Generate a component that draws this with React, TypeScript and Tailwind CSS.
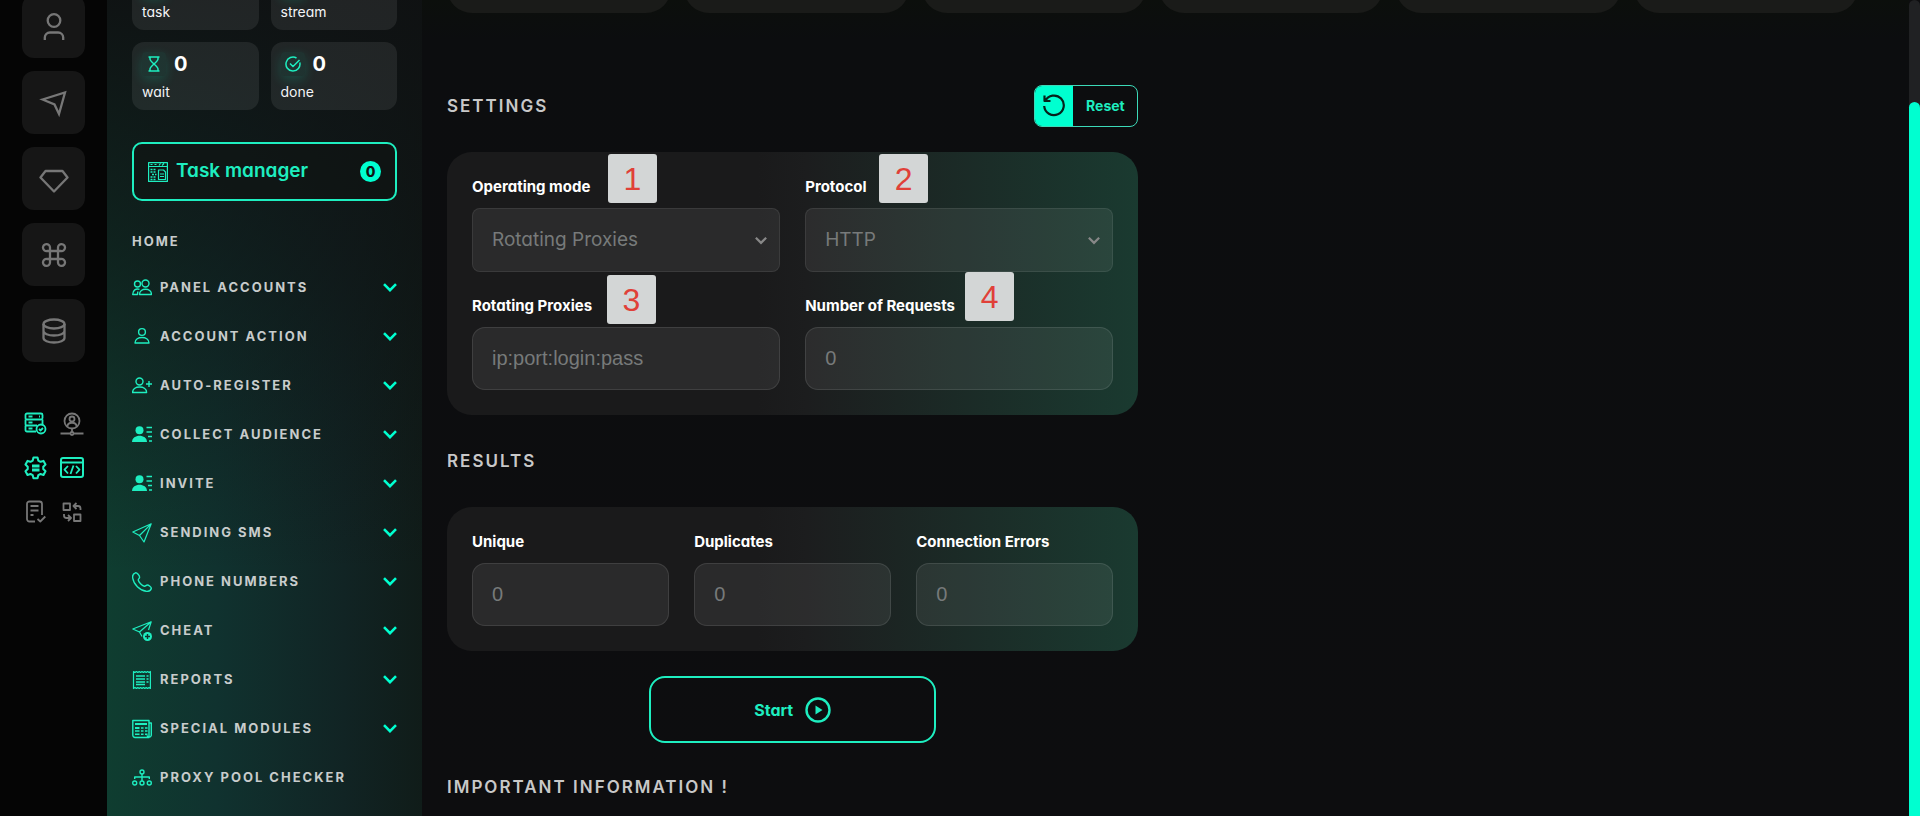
// ============================================================
// Proxy checker screen: icon rail, module sidebar, settings form
// ============================================================
import { useId } from 'react';
import type { ReactNode } from 'react';

const FONT = "font-['Inter','Liberation_Sans',sans-serif] [font-feature-settings:'cv11','ss03']";

// --- icons ---
interface IconProps {
  children: ReactNode;
  className?: string;
  box?: number;
  width?: number;
}

function Icon({ children, className = 'w-5 h-5', box = 20, width = 1.4 }: IconProps) {
  return (
    <svg
      className={`shrink-0 ${className}`}
      viewBox={`0 0 ${box} ${box}`}
      fill="none"
      stroke="currentColor"
      strokeWidth={width}
      strokeLinejoin="round"
      aria-hidden="true"
    >
      {children}
    </svg>
  );
}

function Chevron({ className }: { className: string }) {
  return (
    <svg className={`shrink-0 ${className}`} viewBox="0 0 14 9" fill="none" stroke="currentColor" strokeWidth="2.6" aria-hidden="true">
      <path d="M1 1.2l6 6 6-6" />
    </svg>
  );
}

const railItems = [
  {
    label: 'Profile',
    icon: (
      <>
        <circle cx="15" cy="8.5" r="6.3" />
        <path d="M5.8 28v-2.5a5 5 0 0 1 5-5h8.4a5 5 0 0 1 5 5V28" />
      </>
    ),
  },
  { label: 'Send', icon: <path strokeLinejoin="miter" d="M3.5 11.5L26 4.5l-6 21.5-4.5-9.5z" /> },
  { label: 'Premium', icon: <path d="M6.5 7h17l5 6.500L15 27.500 1.500 13.500z" /> },
  {
    label: 'Shortcuts',
    icon: (
      <path d="M11 11h8v8h-8zM11 11H8a3.500 3.500 0 1 1 3-3.500zM19 11h3a3.500 3.500 0 1 0-3-3.500zM11 19H8a3.500 3.500 0 1 0 3 3.500zM19 19h3a3.500 3.500 0 1 1-3 3.500z" />
    ),
  },
  {
    label: 'Database',
    icon: (
      <>
        <ellipse cx="15" cy="8" rx="10.500" ry="4.500" />
        <path d="M4.500 8v14c0 2.500 4.700 4.500 10.500 4.500s10.500-2 10.500-4.500V8M4.500 15c0 2.500 4.700 4.500 10.500 4.500s10.500-2 10.500-4.500" />
      </>
    ),
  },
];

const quickItems = [
  {
    label: 'Servers',
    active: true,
    icon: (
      <>
        <rect x="1.500" y="1.500" width="17" height="6" rx="1.500" />
        <path d="M18.500 7.500v6M13 13.500H3a1.500 1.500 0 0 1-1.500-1.500V7.500M12 19.500H3A1.500 1.500 0 0 1 1.500 18v-4.500" />
        <path strokeWidth="1.800" d="M4.500 4.500h4M4.500 10.500h4M4.500 16.500h4M15 4.500h1" />
        <circle cx="17" cy="17" r="4.500" />
        <path d="M15 17l1.500 1.500 2.500-2.500" />
      </>
    ),
  },
  {
    label: 'Network user',
    active: false,
    icon: (
      <>
        <circle cx="12" cy="9" r="7.500" />
        <circle cx="12" cy="7" r="2.500" />
        <path d="M7.500 14.500c0-5 9-5 9 0M12 16.500V20M0.500 21.500h9.500M14 21.500h9.500" />
        <circle cx="12" cy="21.500" r="1.500" />
      </>
    ),
  },
  {
    label: 'Server settings',
    active: true,
    icon: (
      <>
        <path
          strokeWidth="2.100"
          d="M9.500 1.500h4l.8 3.100 2.200 1.200 3-.9 2 3.600-2.200 2.200v2.400l2.200 2.200-2 3.600-3-.9-2.200 1.200-.8 3.100h-4l-.8-3.100-2.200-1.200-3 .9-2-3.600 2.200-2.200v-2.400L1.500 8.500l2-3.600 3 .9 2.200-1.200z"
        />
        <path strokeWidth="2.400" d="M8 9.700h7.500M8 14.200h7.500" />
        <path strokeWidth="1" d="M8 12h7.500" />
      </>
    ),
  },
  {
    label: 'Code',
    active: true,
    icon: (
      <>
        <rect strokeWidth="2" x="1" y="2" width="22" height="19" rx="2" />
        <path strokeWidth="1.800" d="M1 6.500h22M8 10L4.500 13.700 8 17.500M16 10l3.500 3.700-3.500 3.800M13.500 9.500l-3 8.500" />
      </>
    ),
  },
  {
    label: 'Checklist',
    active: false,
    icon: (
      <>
        <path d="M11 21.500H5.500A2.500 2.500 0 0 1 3 19V4a2.500 2.500 0 0 1 2.500-2.500h10A2.500 2.500 0 0 1 18 4v11M13.500 19l2.800 2.500 5-5" />
        <path d="M6.500 6h8M6.500 10.500h8M6.500 15h3" />
      </>
    ),
  },
  {
    label: 'Swap',
    active: false,
    icon: (
      <>
        <path d="M3.500 3.500H10V10H3.500zM14 14.500h6.500V21H14zM14 6h4a2.500 2.500 0 0 1 2.500 2.500V10M10.500 18h-4A2.500 2.500 0 0 1 4 15.500V14" />
        <path d="M16.500 3L13.500 6l3 3M8 15l3 3-3 3" />
      </>
    ),
  },
];

const person = (
  <>
    <circle cx="10" cy="5" r="3.400" />
    <path d="M3 16c0-7.300 14-7.300 14 0z" />
  </>
);

const audience = (
  <>
    <circle cx="7.500" cy="5.200" r="4" fill="currentColor" stroke="none" />
    <path d="M0 17c0-8.500 15-8.500 15 0z" fill="currentColor" stroke="none" />
    <path d="M14.500 2.500H20M14.500 7H20M16 11.500h4M17 16h3" />
  </>
);

const navItems = [
  {
    label: 'PANEL ACCOUNTS',
    icon: (
      <>
        <circle cx="13.500" cy="5.500" r="3.500" />
        <circle cx="5.500" cy="6" r="3" />
        <path d="M7.500 16.500c0-7 12-7 12 0zM7.500 11.300C4 10.300.7 12 .7 16.500h4.800l.3-3" />
      </>
    ),
  },
  { label: 'ACCOUNT ACTION', icon: person },
  {
    label: 'AUTO-REGISTER',
    icon: (
      <>
        <circle cx="7.500" cy="5.500" r="3.500" />
        <path d="M.6 16.500c0-7.300 14-7.300 14 0zM17 5v6M14 8h6" />
      </>
    ),
  },
  { label: 'COLLECT AUDIENCE', icon: audience },
  { label: 'INVITE', icon: audience },
  { label: 'SENDING SMS', icon: <path strokeWidth="1.200" d="M.8 9L19.200.8 12 19 7.500 12.500zM19.200.8L7.500 12.500" /> },
  {
    label: 'PHONE NUMBERS',
    icon: (
      <path d="M3.500.8C1 1.500.4 4 .7 6c1 6.500 7 12.500 13.500 13.300 2.300.2 4.600-.8 5.100-2.800.3-1.300-2.800-3.500-4-3.500-1.200 0-1.700 1.500-3 1.200-2.500-.6-5.500-3.700-6-6-.3-1.300 1.300-1.700 1.300-3C7.600 3.500 5 .5 3.500.8z" />
    ),
  },
  {
    label: 'CHEAT',
    icon: (
      <>
        <path strokeWidth="1.200" d="M10 15.500L7.500 11 .8 8 19.200.8 16.500 9M19.200.8L7.500 11" />
        <circle cx="15.500" cy="15.500" r="4.500" fill="currentColor" stroke="none" />
        <path stroke="#0e3530" d="M15.500 13v5M13 15.500h5" />
      </>
    ),
  },
  {
    label: 'REPORTS',
    icon: (
      <>
        <path
          strokeWidth="1.200"
          d="M1.500 1.500l1.500 1 1.400-1 1.400 1 1.400-1 1.400 1 1.400-1 1.400 1 1.400-1 1.400 1 1.400-1 1.400 1 1.400-1v17l-1.400-1-1.400 1-1.400-1-1.400 1-1.400-1-1.400 1-1.400-1-1.400 1-1.400-1-1.400 1-1.400-1-1.500 1z"
        />
        <path strokeWidth="1.500" d="M4 6h9M4 9h9M4 12h9M14.500 6h2M14.500 9h2M14.500 12h2M4 14.500h9" />
      </>
    ),
  },
  {
    label: 'SPECIAL MODULES',
    icon: (
      <>
        <path d="M17 18.500H3A2.200 2.200 0 0 1 .8 16.300V1.500H17zM17 4h2.300v12.300a2.200 2.200 0 0 1-4.300 0" />
        <path strokeWidth="2" d="M3 5h12M3 9h4.500" />
        <path strokeWidth="1.400" d="M9 9h2.500M13 9h2.500M3 12h4.500M9 12h2.500M13 12h2.500M3 15.200h4.500M9 15.200h2.500M13 15.200h2.500" />
      </>
    ),
  },
  {
    label: 'PROXY POOL CHECKER',
    leaf: true,
    icon: (
      <>
        <circle cx="10" cy="4" r="2" />
        <circle cx="2.700" cy="15" r="2" />
        <circle cx="10" cy="15" r="2" />
        <circle cx="17.300" cy="15" r="2" />
        <path d="M10 6v7M2.700 11V9h14.600v2" />
      </>
    ),
  },
];

// --- sidebar ---
function StatCard({ label, icon }: { label: string; icon: ReactNode }) {
  return (
    <div className="rounded-xl bg-white/8 px-[10px] pt-[10px] pb-2">
      <div className="flex items-center gap-2">
        <span className="flex h-6 w-6 items-center justify-center rounded bg-[#00ffd0]/6 text-[#1eeec0] shadow-[0_4px_12px_rgba(0,255,208,0.16)]">
          <Icon className="h-4 w-4" box={16} width={1.5}>{icon}</Icon>
        </span>
        <span className="text-xl leading-6 font-bold text-white">0</span>
      </div>
      <p className="mt-1.5 text-sm leading-5 text-gray-100">{label}</p>
    </div>
  );
}

const hourglass = <path d="M2.500 1h11M2.500 15h11M4 1v2c0 3 8 7 8 10v2M12 1v2c0 3-8 7-8 10v2" />;
const doneCheck = <path d="M14.800 6.500A7 7 0 1 1 11.500 2M5 7.500l3 3 6.500-6.500" />;

function Rail() {
  return (
    <aside className="flex w-[107px] shrink-0 flex-col items-center overflow-hidden bg-[#050505]">
      <div className="-mt-[5px] flex flex-col gap-[13px]">
        {railItems.map((item) => (
          <button
            key={item.label}
            type="button"
            aria-label={item.label}
            className="flex h-[63px] w-[63px] items-center justify-center rounded-xl bg-[#161616] text-[#777]"
          >
            <Icon className="h-[30px] w-[30px]" box={30} width={2.3}>{item.icon}</Icon>
          </button>
        ))}
      </div>
      <div className="mt-[50px] grid grid-cols-2 gap-x-3 gap-y-5">
        {quickItems.map((item) => (
          <button
            key={item.label}
            type="button"
            aria-label={item.label}
            className={item.active ? 'text-[#1eeec0]' : 'text-[#777]'}
          >
            <Icon className="h-6 w-6" box={24} width={1.8}>{item.icon}</Icon>
          </button>
        ))}
      </div>
    </aside>
  );
}

function Sidebar() {
  return (
    <aside className="w-[315px] shrink-0 overflow-hidden bg-[#101315] bg-[linear-gradient(to_bottom,rgba(15,17,18,0.95),rgba(15,17,18,0.6)_30%,transparent_70%),linear-gradient(to_right,#0f3d30,#10322f_35%,#112424_75%,#101c19)] px-[25px]">
      <div className="-mt-[38px] grid grid-cols-2 gap-3">
        <StatCard label="task" icon={doneCheck} />
        <StatCard label="stream" icon={hourglass} />
        <StatCard label="wait" icon={hourglass} />
        <StatCard label="done" icon={doneCheck} />
      </div>
      <button
        type="button"
        className="mt-8 flex h-[59px] w-full items-center gap-2 rounded-[10px] border-2 border-[#1eeec0] bg-[#0f1412]/60 px-[14px] text-[#1eeec0]"
      >
        <Icon width={1.2}>
          <path d="M.6.6h18.800v18.800H.6zM.6 4.500h18.800M2.500 2.500h2M6.500 2.500h2M11 3.500l1.500-2M14 3.500l2-2" />
          <path d="M10.500 8h5l2 2v7.500h-7zM12 12h4M12 14.500h4" />
          <path strokeWidth="1.400" strokeDasharray="2 1" d="M2.500 7.500h6M2.500 10h6M4 12.500h4.500M2.500 15h6M2.500 17.500h6" />
        </Icon>
        <span className="text-[19px] font-semibold">Task manager</span>
        <span className="ml-auto flex h-[21px] w-[21px] items-center justify-center rounded-full bg-[#00ffd0] text-sm leading-5 font-extrabold text-[#0f1412]">
          0
        </span>
      </button>
      <nav className="mt-[30px] text-[13px] font-bold tracking-[2px] text-[#c8cccc]">
        <a href="#home" className="block leading-5">HOME</a>
        <ul className="mt-3">
          {navItems.map((item) => (
            <li key={item.label}>
              {item.leaf ? (
                <a href="#checker" className="flex h-[49px] items-center gap-2">
                  <span className="text-[#1eeec0]"><Icon>{item.icon}</Icon></span>
                  {item.label}
                </a>
              ) : (
                <button type="button" aria-expanded="false" className="flex h-[49px] w-full items-center gap-2 text-left">
                  <span className="text-[#1eeec0]"><Icon>{item.icon}</Icon></span>
                  {item.label}
                  <Chevron className="ml-auto h-[9px] w-[14px] text-[#00ffd0]" />
                </button>
              )}
            </li>
          ))}
        </ul>
      </nav>
    </aside>
  );
}

// --- form ---
interface FieldProps {
  label: string;
  marker?: ReactNode;
  placeholder?: string;
  option?: string;
}

function Marker({ value, place }: { value: number; place: string }) {
  return (
    <span
      className={`absolute flex h-[49px] w-[49px] items-center justify-center rounded-[3px] bg-[#d3d6d6] font-['Liberation_Sans',Arial,sans-serif] text-[32px] text-[#e04038] ${place}`}
    >
      {value}
    </span>
  );
}

function Field({ label, marker, placeholder, option }: FieldProps) {
  const id = useId();
  return (
    <div className="relative min-w-0">
      <label htmlFor={id} className="block text-[15px] leading-5 font-bold text-white">{label}</label>
      {marker}
      {option ? (
        <div className="relative mt-[11px]">
          <select
            id={id}
            className="h-16 w-full appearance-none rounded-lg border border-white/8 bg-white/7 pl-[19px] text-[19px] text-[#777a7a] outline-none"
          >
            <option>{option}</option>
          </select>
          <Chevron className="pointer-events-none absolute top-7 right-[13px] h-[9px] w-3 text-[#888]" />
        </div>
      ) : (
        <input
          id={id}
          type="text"
          placeholder={placeholder}
          className="mt-[11px] h-[63px] w-full rounded-[13px] border border-white/10 bg-white/7 px-[19px] font-['Liberation_Sans',Arial,sans-serif] text-xl text-white outline-none placeholder:text-[#777a7a]"
        />
      )}
    </div>
  );
}

const PANEL = 'rounded-[25px] bg-[linear-gradient(to_right,#1a1a1b_45%,#1c1d1e_52%,#1a3a30)] p-[25px]';
const HEADING = 'text-[17px] leading-6 font-semibold tracking-[2px] text-[#c8c8c8]';

function Main() {
  return (
    <main className="min-w-0 flex-1 overflow-hidden bg-[#0d0d0f] bg-[linear-gradient(to_bottom,#0c0f0c,#0c0d0f_40px,#0d0d0f)] pr-[51px] pl-[25px]">
      <div className="-mt-[87px] grid grid-cols-6 gap-[13px]">
        {[0, 1, 2, 3, 4, 5].map((n) => (
          <div key={n} className="h-[100px] rounded-[25px] bg-[#1a1b19]" />
        ))}
      </div>
      <form className="mt-[72px] w-[49%]" onSubmit={(e) => e.preventDefault()}>
        <div className="flex items-center justify-between">
          <h2 className={HEADING}>SETTINGS</h2>
          <button
            type="reset"
            className="flex h-[42px] w-[104px] overflow-hidden rounded-lg border border-[#3cd9b8] text-sm font-bold text-[#1eeec0]"
          >
            <span className="flex h-full w-[38px] items-center justify-center bg-[#00ffd0] text-[#06211b]">
              <Icon className="h-6 w-6" box={24} width={2.2}>
                <path d="M2.500 1.500v5.500H8.500M3.200 7A9.800 9.800 0 1 1 2.200 12" />
              </Icon>
            </span>
            <span className="flex h-full flex-1 items-center justify-center">Reset</span>
          </button>
        </div>
        <section className={`mt-[25px] grid grid-cols-2 gap-x-[25px] gap-y-6 ${PANEL}`}>
          <Field label="Operating mode" option="Rotating Proxies" marker={<Marker value={1} place="-top-[23px] left-[136px]" />} />
          <Field label="Protocol" option="HTTP" marker={<Marker value={2} place="-top-[23px] left-[74px]" />} />
          <Field label="Rotating Proxies" placeholder="ip:port:login:pass" marker={<Marker value={3} place="-top-[21px] left-[135px]" />} />
          <Field label="Number of Requests" placeholder="0" marker={<Marker value={4} place="-top-6 left-[160px]" />} />
        </section>
        <h2 className={`mt-[34px] ${HEADING}`}>RESULTS</h2>
        <section className={`mt-[34px] grid grid-cols-3 gap-[25px] ${PANEL}`}>
          <Field label="Unique" placeholder="0" />
          <Field label="Duplicates" placeholder="0" />
          <Field label="Connection Errors" placeholder="0" />
        </section>
        <button
          type="submit"
          className="mx-auto mt-[25px] flex h-[67px] w-[287px] items-center justify-center gap-3 rounded-2xl border-2 border-[#1eeec0] text-base font-bold text-[#1eeec0]"
        >
          Start
          <Icon className="h-[26px] w-[26px]" box={26} width={2.4}>
            <circle cx="13" cy="13" r="11.500" />
            <path d="M10.500 8.500v9l7-4.500z" fill="currentColor" stroke="none" />
          </Icon>
        </button>
        <h2 className={`mt-8 ${HEADING}`}>IMPORTANT INFORMATION !</h2>
      </form>
    </main>
  );
}

export default function App() {
  return (
    <div className={`flex h-screen overflow-hidden bg-[#0d0d0f] ${FONT}`}>
      <Rail />
      <Sidebar />
      <Main />
      {/* scroll track */}
      <div className="flex w-[11px] shrink-0 rounded-t-full bg-[#202123] pt-[102px]">
        <div className="flex-1 rounded-t-full bg-[#00ffd0]" />
      </div>
    </div>
  );
}
